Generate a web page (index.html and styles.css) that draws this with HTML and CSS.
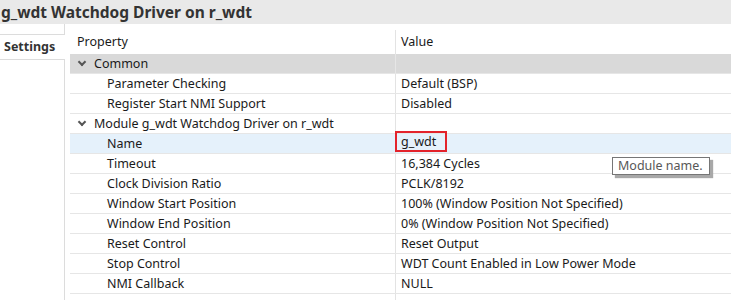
FILE: index.html
```html
<!DOCTYPE html>
<html lang="en">
  <head>
    <meta charset="utf-8">
    <title>g_wdt Watchdog Driver on r_wdt</title>
    <link rel="stylesheet" href="styles.css">
  </head>
  <body>
    <div class="titlebar">g_wdt Watchdog Driver on r_wdt</div>
    <div class="main">
      <div class="tabs">
        <div class="tabgap"></div>
        <div class="tab">Settings</div>
        <div class="tabrest"></div>
      </div>
      <div class="grid">
        <div class="row header">
          <div class="cell name">Property</div>
          <div class="cell value">Value</div>
        </div>
        <div class="row group common">
          <div class="cell name"><span class="chev"></span>Common</div>
          <div class="cell value"></div>
        </div>
        <div class="row">
          <div class="cell name child">Parameter Checking</div>
          <div class="cell value">Default (BSP)</div>
        </div>
        <div class="row">
          <div class="cell name child">Register Start NMI Support</div>
          <div class="cell value">Disabled</div>
        </div>
        <div class="row group">
          <div class="cell name"><span class="chev"></span>Module g_wdt Watchdog Driver on r_wdt</div>
          <div class="cell value"></div>
        </div>
        <div class="row selected">
          <div class="cell name child">Name</div>
          <div class="cell value"><span class="edit">g_wdt</span></div>
        </div>
        <div class="row">
          <div class="cell name child">Timeout</div>
          <div class="cell value">16,384 Cycles</div>
        </div>
        <div class="row">
          <div class="cell name child">Clock Division Ratio</div>
          <div class="cell value">PCLK/8192</div>
        </div>
        <div class="row">
          <div class="cell name child">Window Start Position</div>
          <div class="cell value">100% (Window Position Not Specified)</div>
        </div>
        <div class="row">
          <div class="cell name child">Window End Position</div>
          <div class="cell value">0% (Window Position Not Specified)</div>
        </div>
        <div class="row">
          <div class="cell name child">Reset Control</div>
          <div class="cell value">Reset Output</div>
        </div>
        <div class="row">
          <div class="cell name child">Stop Control</div>
          <div class="cell value">WDT Count Enabled in Low Power Mode</div>
        </div>
        <div class="row">
          <div class="cell name child">NMI Callback</div>
          <div class="cell value">NULL</div>
        </div>
        <div class="rest">
          <div class="cell name"></div>
          <div class="cell value"></div>
        </div>
      </div>
    </div>
    <div class="tooltip">Module name.</div>
  </body>
</html>
```

FILE: styles.css
```css
html, body {
  margin: 0;
  height: 100%;
  overflow: hidden;
  background: #fff;
  font-family: "Noto Sans", "Open Sans", sans-serif;
  font-size: 12.5px;
  color: #1a1a1a;
}
.titlebar {
  height: 24px;
  line-height: 24px;
  padding-left: 1px;
  background: #e9e9e9;
  font-size: 15.5px;
  font-weight: bold;
  color: #333;
  white-space: nowrap;
}
.main {
  display: flex;
  height: 276px;
}
.tabs {
  display: flex;
  flex-direction: column;
  width: 65px;
}
.tabgap {
  height: 10px;
  border-right: 1px solid #dcdcdc;
}
.tab {
  height: 24px;
  line-height: 24px;
  padding-left: 4px;
  border-top: 1px solid #dcdcdc;
  border-bottom: 1px solid #dcdcdc;
  font-weight: bold;
  color: #333;
}
.tabrest {
  flex: 1;
  border-right: 1px solid #dcdcdc;
}
.grid {
  display: flex;
  flex-direction: column;
  flex: 1;
  margin-left: 5px;
}
.row, .rest {
  display: flex;
  height: 19px;
  border-bottom: 1px solid #e6e6e6;
}
.rest {
  flex: 1;
  border-bottom: 0;
}
.cell {
  line-height: 19px;
  white-space: nowrap;
}
.cell.name {
  width: 325px;
  padding-left: 7px;
  box-sizing: border-box;
}
.cell.name.child {
  padding-left: 37px;
}
.cell.value {
  flex: 1;
  padding-left: 5px;
  border-left: 1px solid #e3e3e3;
}
.header {
  height: 24px;
  margin-top: 6px;
  border-bottom: 0;
}
.header .cell {
  line-height: 24px;
}
.common {
  background: #d9d9d9;
}
.common .cell.value {
  border-left-color: #e6e6e6;
}
.selected {
  background: #e5f1fb;
}
.group .cell.name {
  display: flex;
  align-items: center;
}
.chev {
  width: 4px;
  height: 4px;
  margin: -3px 9px 0 2px;
  border-right: 2px solid #555;
  border-bottom: 2px solid #555;
  transform: rotate(45deg);
}
.edit {
  display: inline-block;
  height: 17px;
  line-height: 17px;
  margin-left: -6px;
  margin-top: -3px;
  padding: 0 9px 0 4px;
  border: 2px solid #e3232b;
  vertical-align: top;
}
.tooltip {
  position: absolute;
  left: 612px;
  top: 157px;
  height: 18px;
  line-height: 16px;
  box-sizing: border-box;
  padding: 0 6px 0 5px;
  background: #fff;
  border: 1px solid #767676;
  box-shadow: 3px 3px 1px #a8a8a8;
  color: #575757;
  white-space: nowrap;
}
```
